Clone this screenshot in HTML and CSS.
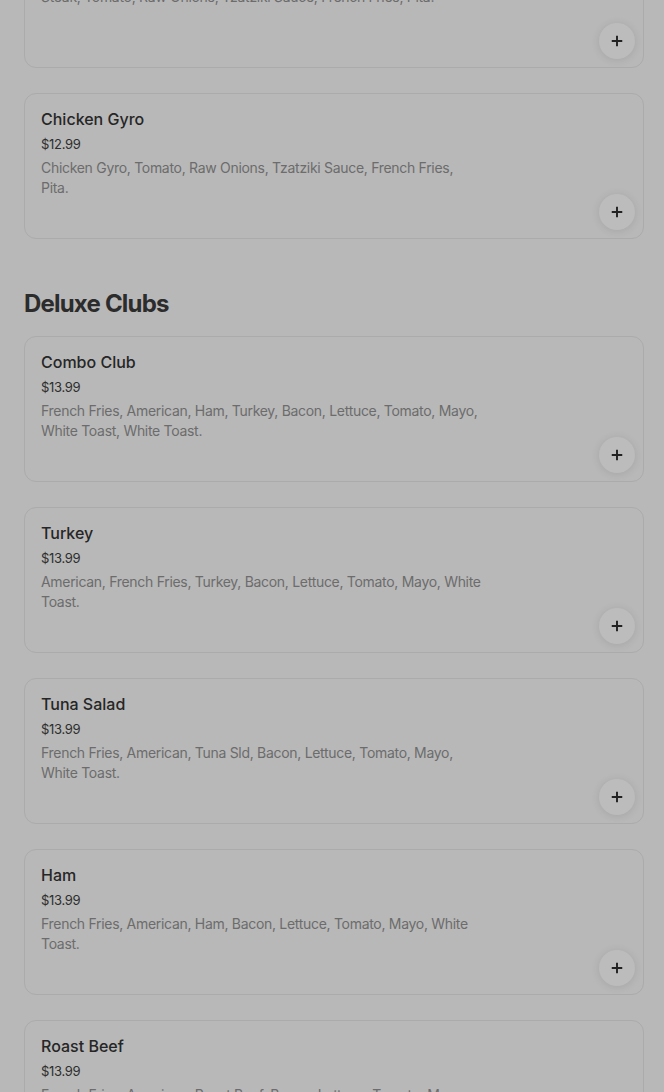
FILE: index.html
```html
<!DOCTYPE html>
<html lang="en">
<head>
<meta charset="utf-8">
<title>Menu</title>
<link rel="stylesheet" href="styles.css">
</head>
<body>
<main class="menu">
  <section class="section">
    <div class="cards">
      <article class="card">
        <div class="info">
          <h3 class="name">Steak Gyro</h3>
          <div class="price">$12.99</div>
          <p class="desc">Steak, Tomato, Raw Onions, Tzatziki Sauce, French Fries, Pita.</p>
        </div>
        <button class="add" aria-label="Add"><svg viewBox="0 0 16 16" width="14" height="14"><path d="M8 2v12M2 8h12" stroke="currentColor" stroke-width="2.2" fill="none"/></svg></button>
      </article>
      <article class="card">
        <div class="info">
          <h3 class="name">Chicken Gyro</h3>
          <div class="price">$12.99</div>
          <p class="desc">Chicken Gyro, Tomato, Raw Onions, Tzatziki Sauce, French Fries, Pita.</p>
        </div>
        <button class="add" aria-label="Add"><svg viewBox="0 0 16 16" width="14" height="14"><path d="M8 2v12M2 8h12" stroke="currentColor" stroke-width="2.2" fill="none"/></svg></button>
      </article>
    </div>
  </section>
  <section class="section">
    <h2 class="section-title">Deluxe Clubs</h2>
    <div class="cards">
      <article class="card">
        <div class="info">
          <h3 class="name">Combo Club</h3>
          <div class="price">$13.99</div>
          <p class="desc">French Fries, American, Ham, Turkey, Bacon, Lettuce, Tomato, Mayo, White Toast, White Toast.</p>
        </div>
        <button class="add" aria-label="Add"><svg viewBox="0 0 16 16" width="14" height="14"><path d="M8 2v12M2 8h12" stroke="currentColor" stroke-width="2.2" fill="none"/></svg></button>
      </article>
      <article class="card">
        <div class="info">
          <h3 class="name">Turkey</h3>
          <div class="price">$13.99</div>
          <p class="desc">American, French Fries, Turkey, Bacon, Lettuce, Tomato, Mayo, White Toast.</p>
        </div>
        <button class="add" aria-label="Add"><svg viewBox="0 0 16 16" width="14" height="14"><path d="M8 2v12M2 8h12" stroke="currentColor" stroke-width="2.2" fill="none"/></svg></button>
      </article>
      <article class="card">
        <div class="info">
          <h3 class="name">Tuna Salad</h3>
          <div class="price">$13.99</div>
          <p class="desc">French Fries, American, Tuna Sld, Bacon, Lettuce, Tomato, Mayo, White Toast.</p>
        </div>
        <button class="add" aria-label="Add"><svg viewBox="0 0 16 16" width="14" height="14"><path d="M8 2v12M2 8h12" stroke="currentColor" stroke-width="2.2" fill="none"/></svg></button>
      </article>
      <article class="card">
        <div class="info">
          <h3 class="name">Ham</h3>
          <div class="price">$13.99</div>
          <p class="desc">French Fries, American, Ham, Bacon, Lettuce, Tomato, Mayo, White Toast.</p>
        </div>
        <button class="add" aria-label="Add"><svg viewBox="0 0 16 16" width="14" height="14"><path d="M8 2v12M2 8h12" stroke="currentColor" stroke-width="2.2" fill="none"/></svg></button>
      </article>
      <article class="card">
        <div class="info">
          <h3 class="name">Roast Beef</h3>
          <div class="price">$13.99</div>
          <p class="desc">French Fries, American, Roast Beef, Bacon, Lettuce, Tomato, Mayo, White Toast.</p>
        </div>
        <button class="add" aria-label="Add"><svg viewBox="0 0 16 16" width="14" height="14"><path d="M8 2v12M2 8h12" stroke="currentColor" stroke-width="2.2" fill="none"/></svg></button>
      </article>
    </div>
  </section>
</main>
</body>
</html>
```
FILE: styles.css
```css
html, body {
  margin: 0;
  padding: 0;
  background: #b8b8b8;
  overflow: hidden;
}
body {
  font-family: Inter, "Noto Sans", sans-serif;
  color: #222;
}
.menu {
  padding: 0 20px 0 24px;
  margin-top: -78px;
  display: flex;
  flex-direction: column;
}
.section {
  display: flex;
  flex-direction: column;
}
.section + .section {
  margin-top: 49px;
}
.section-title {
  margin: 0 0 16px;
  font-size: 24px;
  line-height: 32px;
  font-weight: 700;
  letter-spacing: -0.8px;
  color: #2c2c2c;
}
.cards {
  display: flex;
  flex-direction: column;
  gap: 25px;
}
.card {
  position: relative;
  height: 146px;
  box-sizing: border-box;
  border: 1px solid #ababab;
  border-radius: 12px;
  padding: 15px 16px;
  display: flex;
}
.info {
  width: 443px;
}
.name {
  margin: 0;
  font-size: 16px;
  line-height: 20px;
  font-weight: 500;
  color: #262626;
}
.price {
  margin-top: 5px;
  font-size: 13px;
  line-height: 20px;
  letter-spacing: -0.3px;
  color: #2e2e2e;
}
.desc {
  margin: 4px 0 0;
  font-size: 14px;
  line-height: 20px;
  letter-spacing: -0.3px;
  color: #6c6c6c;
}
.add {
  position: absolute;
  right: 8px;
  bottom: 8px;
  width: 36px;
  height: 36px;
  border-radius: 50%;
  border: 0;
  padding: 0;
  background: #bcbcbc;
  box-shadow: 0 1px 8px rgba(0, 0, 0, 0.1);
  color: #222;
  display: flex;
  align-items: center;
  justify-content: center;
}
.add svg {
  display: block;
}
```
